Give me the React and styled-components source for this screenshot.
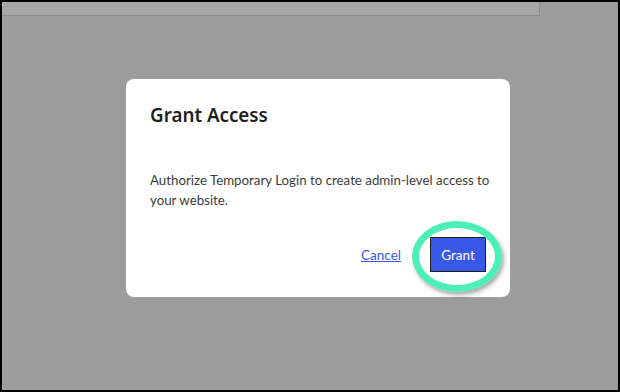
import React from "react";
import styled, { createGlobalStyle } from "styled-components";

const GlobalStyle = createGlobalStyle`
  html, body {
    margin: 0;
    padding: 0;
    background: #9c9c9c;
  }
  * {
    box-sizing: border-box;
  }
`;

const Frame = styled.div`
  width: 620px;
  height: 392px;
  border: 2px solid #000;
  background: #9c9c9c;
  display: flex;
  flex-direction: column;
  overflow: hidden;
  font-family: "Noto Sans", "Open Sans", sans-serif;
`;

const TopStrip = styled.div`
  width: 538px;
  height: 14px;
  background: #a6a6a6;
  border-right: 1px solid #8e8e8e;
  border-bottom: 1px solid #8e8e8e;
`;

const Dialog = styled.div`
  margin: 63px 0 0 124px;
  width: 384px;
  height: 218px;
  background: #fff;
  border-radius: 8px;
  padding: 22px 24px 25px;
  display: flex;
  flex-direction: column;
`;

const Title = styled.h1`
  margin: 0;
  font-size: 18.8px;
  font-weight: 600;
  line-height: 28px;
  color: #1e1e1e;
`;

const Body = styled.p`
  margin: 41px -8px 0 0;
  font-family: Lato, "Noto Sans", sans-serif;
  font-size: 13.3px;
  line-height: 20px;
  color: #3c3c3c;
`;

const Footer = styled.div`
  margin-top: auto;
  display: flex;
  justify-content: flex-end;
  align-items: center;
  gap: 29px;
`;

const LinkButton = styled.a`
  font-family: Lato, "Noto Sans", sans-serif;
  font-size: 13.5px;
  color: #3858e9;
  text-decoration: underline;
  cursor: pointer;
`;

const Highlight = styled.div`
  position: relative;
  display: flex;
`;

const PrimaryButton = styled.button`
  width: 56px;
  height: 35px;
  background: #3858e9;
  color: #fff;
  border: 1px solid #1e1e1e;
  border-radius: 0;
  font-family: Lato, "Noto Sans", sans-serif;
  font-size: 13.5px;
  padding: 0;
  cursor: pointer;
`;

const Ring = styled.span`
  position: absolute;
  top: -16px;
  bottom: -20px;
  left: -18px;
  right: -16px;
  border: 7px solid #4cefb8;
  border-radius: 50%;
  box-shadow: 2px 3px 4px rgba(0, 0, 0, 0.35);
  pointer-events: none;
`;

const App = () => {
  return (
    <>
      <GlobalStyle />
      <Frame>
        <TopStrip />
        <Dialog>
          <Title>Grant Access</Title>
          <Body>
            Authorize Temporary Login to create admin-level access to your
            website.
          </Body>
          <Footer>
            <LinkButton>Cancel</LinkButton>
            <Highlight>
              <PrimaryButton>Grant</PrimaryButton>
              <Ring />
            </Highlight>
          </Footer>
        </Dialog>
      </Frame>
    </>
  );
};

export default App;
